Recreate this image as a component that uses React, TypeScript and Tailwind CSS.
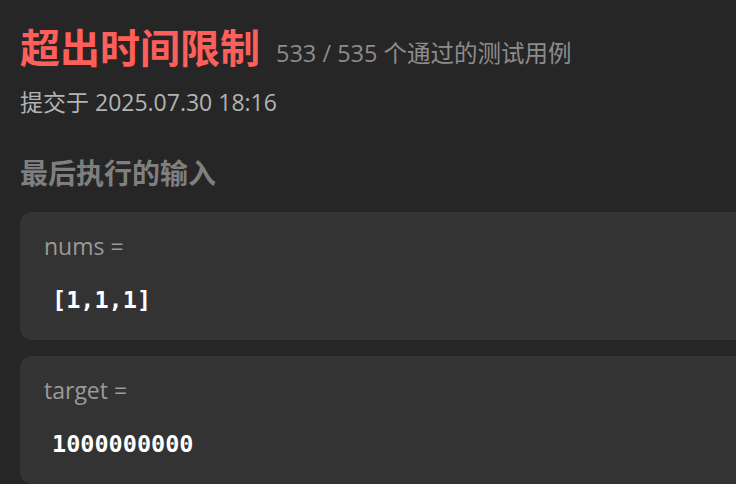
import React from "react";

const sans = '"Segoe UI", "Open Sans", "Noto Sans", "Noto Sans CJK SC", sans-serif';
const mono = '"DejaVu Sans Mono", "Liberation Mono", monospace';

function Card({ label, value }: { label: string; value: string }) {
  return (
    <div className="rounded-xl bg-[#333333] w-[760px] h-[128px] pl-6 pt-[19px]">
      <div className="text-[23px] leading-[30px] text-[#9a9a9a]" style={{ fontFamily: sans }}>
        {label}
      </div>
      <div
        className="mt-[24px] ml-2 text-[23.5px] leading-[30px] font-bold text-white"
        style={{ fontFamily: mono }}
      >
        {value}
      </div>
    </div>
  );
}

export default function App() {
  return (
    <div className="w-[736px] h-[484px] overflow-hidden bg-[#262626] pl-5 pt-[24px]" style={{ fontFamily: sans }}>
      <div className="flex items-end gap-4">
        <div className="text-[40px] leading-[48px] font-bold text-[#ff5f5a]">超出时间限制</div>
        <div className="text-[23.5px] leading-[32px] mb-[3px] text-[#8c8c8c]">533 / 535 个通过的测试用例</div>
      </div>
      <div className="mt-[15px] text-[23px] leading-[30px] text-[#b3b3b3]">提交于 2025.07.30 18:16</div>
      <div className="mt-[38px] text-[28px] leading-[36px] font-bold text-[#7f7f7f]">最后执行的输入</div>
      <div className="mt-[21px] flex flex-col gap-4">
        <Card label="nums =" value="[1,1,1]" />
        <Card label="target =" value="1000000000" />
      </div>
    </div>
  );
}
